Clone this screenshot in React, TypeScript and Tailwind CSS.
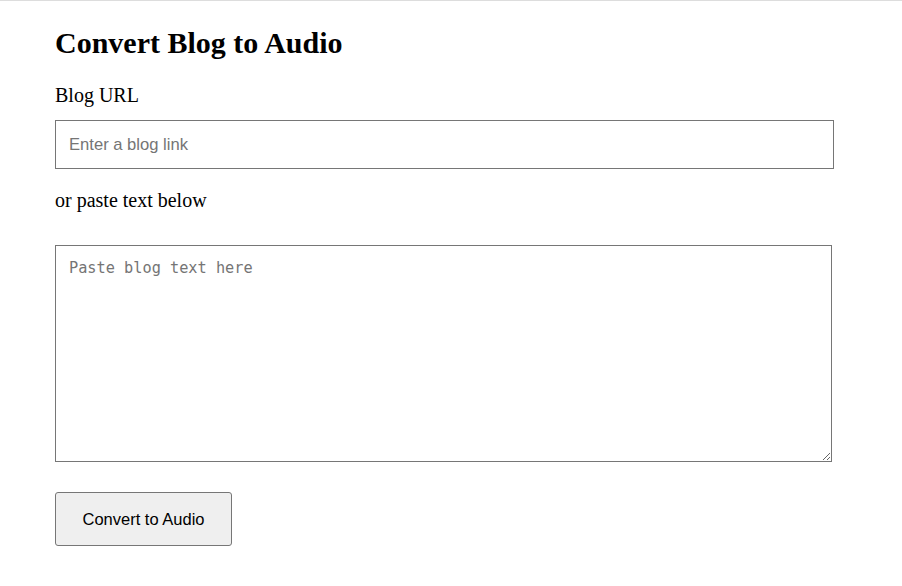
export default function App() {
  return (
    <div className="min-h-screen bg-white border-t border-[#dddddd]">
      <div className="pl-[55px] pt-[24px] w-[834px]">
        <h1 className="text-[30px] leading-[36px] font-bold text-black font-['Liberation_Serif',serif]">
          Convert Blog to Audio
        </h1>

        <label className="block mt-[23px] text-[20px] leading-[22px] text-black font-['Liberation_Serif',serif]">
          Blog URL
        </label>
        <input
          type="text"
          placeholder="Enter a blog link"
          className="block mt-[14px] w-[779px] h-[49px] px-[13px] border border-[#767676] bg-white text-[16.6px] font-['Liberation_Sans',sans-serif] placeholder:text-[#757575] outline-none"
        />

        <p className="mt-[20px] text-[20px] leading-[22px] text-black font-['Liberation_Serif',serif]">
          or paste text below
        </p>
        <textarea
          placeholder="Paste blog text here"
          className="block mt-[34px] w-[777px] h-[217px] px-[13px] pt-[11px] pb-[13px] border border-[#767676] bg-white text-[15.25px] font-['DejaVu_Sans_Mono',monospace] placeholder:text-[#757575] outline-none"
        />

        <button
          type="button"
          className="block mt-[30px] w-[177px] h-[54px] rounded-[3px] border border-[#767676] bg-[#efefef] text-[16.5px] text-black font-['Liberation_Sans',sans-serif]"
        >
          Convert to Audio
        </button>
      </div>
    </div>
  );
}
